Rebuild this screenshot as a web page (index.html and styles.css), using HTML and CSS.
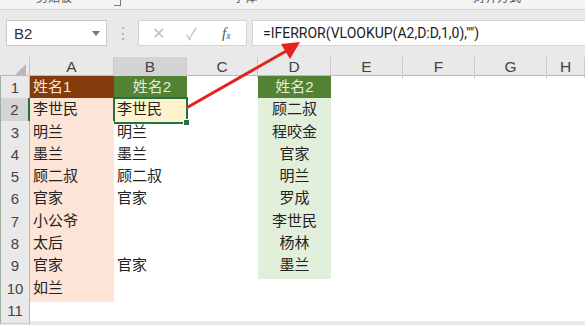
FILE: index.html
```html
<!DOCTYPE html>
<html lang="zh-CN">
<head>
  <meta charset="UTF-8" />
  <title>VLOOKUP</title>
  <link rel="stylesheet" href="styles.css">
</head>
<body>
  <!-- ribbon group labels, cut off at the top -->
  <div class="ribbon">
    <span class="group-label clip">剪贴板</span>
    <span class="launcher"></span>
    <span class="group-label font">字体</span>
    <span class="group-label align">对齐方式</span>
  </div>

  <!-- formula bar -->
  <div class="formula-bar">
    <div class="name-box">
      <span>B2</span>
      <span class="caret"></span>
    </div>
    <div class="grip">⋮</div>
    <div class="func-box">
      <span class="fb-icon">✕</span>
      <span class="fb-icon">✓</span>
      <span class="fx">f<sub>x</sub></span>
    </div>
    <div class="formula-input">=IFERROR(VLOOKUP(A2,D:D,1,0),"")</div>
  </div>

  <!-- sheet -->
  <div class="sheet">
    <div class="row head">
      <div class="corner"><span class="tri"></span></div>
      <div class="ch">A</div>
      <div class="ch sel">B</div>
      <div class="ch">C</div>
      <div class="ch">D</div>
      <div class="ch">E</div>
      <div class="ch">F</div>
      <div class="ch">G</div>
      <div class="ch">H</div>
    </div>

    <div class="row">
      <div class="rh">1</div>
      <div class="c a title">姓名1</div>
      <div class="c b title">姓名2</div>
      <div class="c"></div>
      <div class="c d title">姓名2</div>
    </div>
    <div class="row">
      <div class="rh sel">2</div>
      <div class="c a">李世民</div>
      <div class="c b active">李世民<span class="handle"></span></div>
      <div class="c"></div>
      <div class="c d">顾二叔</div>
    </div>
    <div class="row">
      <div class="rh">3</div>
      <div class="c a">明兰</div>
      <div class="c b">明兰</div>
      <div class="c"></div>
      <div class="c d">程咬金</div>
    </div>
    <div class="row">
      <div class="rh">4</div>
      <div class="c a">墨兰</div>
      <div class="c b">墨兰</div>
      <div class="c"></div>
      <div class="c d">官家</div>
    </div>
    <div class="row">
      <div class="rh">5</div>
      <div class="c a">顾二叔</div>
      <div class="c b">顾二叔</div>
      <div class="c"></div>
      <div class="c d">明兰</div>
    </div>
    <div class="row">
      <div class="rh">6</div>
      <div class="c a">官家</div>
      <div class="c b">官家</div>
      <div class="c"></div>
      <div class="c d">罗成</div>
    </div>
    <div class="row">
      <div class="rh">7</div>
      <div class="c a">小公爷</div>
      <div class="c b"></div>
      <div class="c"></div>
      <div class="c d">李世民</div>
    </div>
    <div class="row">
      <div class="rh">8</div>
      <div class="c a">太后</div>
      <div class="c b"></div>
      <div class="c"></div>
      <div class="c d">杨林</div>
    </div>
    <div class="row">
      <div class="rh">9</div>
      <div class="c a">官家</div>
      <div class="c b">官家</div>
      <div class="c"></div>
      <div class="c d">墨兰</div>
    </div>
    <div class="row">
      <div class="rh">10</div>
      <div class="c a">如兰</div>
    </div>
    <div class="row">
      <div class="rh">11</div>
    </div>
  </div>

  <!-- red arrow pointing at the formula -->
  <svg class="arrow" width="585" height="325" viewBox="0 0 585 325">
    <line x1="188" y1="107" x2="288" y2="50" stroke="#e3231c" stroke-width="3" stroke-linecap="round"/>
    <polygon points="300,42 281,44 290,59" fill="#e3231c"/>
  </svg>
</body>
</html>
```

FILE: styles.css
```css
body {
  margin: 0;
  width: 585px;
  height: 325px;
  overflow: hidden;
  position: relative;
  background-color: #e9e9e9;
  font-family: "Liberation Sans", "Noto Sans CJK SC", sans-serif;
  color: #222;
}

/* ribbon */
.ribbon {
  height: 9px;
  background-color: #f4f4f4;
  border-bottom: 1px solid #d6d6d6;
  overflow: hidden;
  position: relative;
  font-size: 12px;
  color: #555;
}

.group-label {
  position: absolute;
  top: -9px;
  line-height: 14px;
}

.group-label.clip { left: 36px; }
.group-label.font { left: 233px; }
.group-label.align { left: 473px; }

.launcher {
  position: absolute;
  left: 114px;
  top: 0;
  width: 6px;
  height: 5px;
  border-right: 1px solid #777;
  border-bottom: 1px solid #777;
}

/* formula bar */
.formula-bar {
  display: flex;
  align-items: center;
  height: 28px;
  margin-top: 9px;
  padding-left: 6px;
}

.name-box {
  height: 26px;
  background-color: #fff;
  border: 1px solid #c9c9c9;
  display: flex;
  align-items: center;
  justify-content: space-between;
  padding: 0 6px 0 7px;
  box-sizing: border-box;
  width: 101px;
  font-size: 15px;
  color: #333;
}

.caret {
  width: 0;
  height: 0;
  border-left: 4px solid transparent;
  border-right: 4px solid transparent;
  border-top: 5px solid #777;
}

.grip {
  width: 31px;
  text-align: center;
  color: #aaa;
  font-size: 16px;
}

.func-box {
  width: 109px;
  height: 26px;
  background-color: #fff;
  border: 1px solid #d4d4d4;
  box-sizing: border-box;
  display: flex;
  align-items: center;
  padding-left: 13px;
  gap: 18px;
}

.fb-icon {
  color: #c2c2c2;
  font-size: 16px;
  width: 16px;
}

.fx {
  font-family: "Liberation Serif", serif;
  font-style: italic;
  font-size: 15px;
  color: #555;
  margin-left: 2px;
}

.fx sub {
  font-size: 10px;
  vertical-align: -1px;
}

.formula-input {
  flex: 1;
  height: 26px;
  margin-left: 5px;
  background-color: #fff;
  border: 1px solid #d4d4d4;
  border-right: none;
  box-sizing: border-box;
  padding-left: 10px;
  line-height: 24px;
  font-family: Roboto, "Liberation Sans", sans-serif;
  font-size: 14px;
  color: #222;
}

/* sheet */
.sheet {
  margin-top: 10px;
  background-color: #fff;
}

.row {
  display: grid;
  grid-template-columns: 30px 84px 73px 71px 73px 72px 72px 72px 1fr;
  height: 22.3px;
  font-size: 15px;
}

.row.head {
  height: 19px;
  background-color: #e9e9e9;
  border-bottom: 1px solid #b9b9b9;
  box-sizing: border-box;
  color: #444;
  font-size: 15.5px;
}

.corner {
  position: relative;
  border-right: 1px solid #c4c4c4;
}

.tri {
  position: absolute;
  right: 3px;
  bottom: 3px;
  width: 0;
  height: 0;
  border-left: 11px solid transparent;
  border-bottom: 11px solid #b8b8b8;
}

.ch {
  text-align: center;
  line-height: 19px;
  border-right: 1px solid #c9c9c9;
}

.ch.sel {
  background-color: #d4d4d4;
  border-bottom: 2px solid #217346;
}

.rh {
  background-color: #e9e9e9;
  border-right: 1px solid #b9b9b9;
  border-bottom: 1px solid #cdcdcd;
  border-left: 1px solid #9fb09f;
  box-sizing: border-box;
  text-align: center;
  line-height: 24px;
  color: #444;
}

.rh.sel {
  background-color: #d4d4d4;
  border-right: 2px solid #217346;
}

.c {
  line-height: 22px;
  padding-left: 3px;
  white-space: nowrap;
  position: relative;
}

.c.a { background-color: #fce4d6; }

.c.d {
  background-color: #e2efda;
  text-align: center;
  padding-left: 0;
}

.c.title {
  color: #fbe5d6;
}

.c.a.title { background-color: #843c0c; }

.c.b.title {
  background-color: #548235;
  color: #e2efda;
  text-align: center;
}

.c.d.title {
  background-color: #548235;
  color: #e2efda;
}

.c.active {
  background-color: #fff2cc;
  outline: 2px solid #217346;
  outline-offset: -1px;
}

.handle {
  position: absolute;
  right: -3px;
  bottom: -3px;
  width: 5px;
  height: 5px;
  background-color: #217346;
  border: 1px solid #fff;
}

.arrow {
  position: absolute;
  left: 0;
  top: 0;
  pointer-events: none;
}
```
